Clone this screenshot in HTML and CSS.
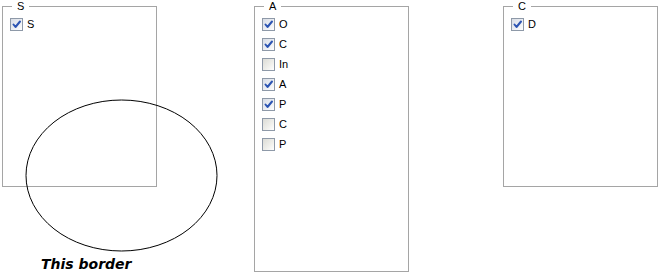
FILE: index.html
```html
<!DOCTYPE html>
<html>
<head>
<meta charset="utf-8">
<link rel="stylesheet" href="styles.css">
</head>
<body>
<div class="page">
  <div class="col">
    <fieldset class="group short">
      <legend>S</legend>
      <label class="item"><span class="box on"><svg viewBox="0 0 11 11" width="11" height="11"><path d="M2.5 5.5 L4.5 8 L9 2.5" /></svg></span>S</label>
    </fieldset>
    <div class="caption">This border</div>
  </div>
  <div class="col">
    <fieldset class="group tall">
      <legend>A</legend>
      <label class="item"><span class="box on"><svg viewBox="0 0 11 11" width="11" height="11"><path d="M2.5 5.5 L4.5 8 L9 2.5" /></svg></span>O</label>
      <label class="item"><span class="box on"><svg viewBox="0 0 11 11" width="11" height="11"><path d="M2.5 5.5 L4.5 8 L9 2.5" /></svg></span>C</label>
      <label class="item"><span class="box"></span>In</label>
      <label class="item"><span class="box on"><svg viewBox="0 0 11 11" width="11" height="11"><path d="M2.5 5.5 L4.5 8 L9 2.5" /></svg></span>A</label>
      <label class="item"><span class="box on"><svg viewBox="0 0 11 11" width="11" height="11"><path d="M2.5 5.5 L4.5 8 L9 2.5" /></svg></span>P</label>
      <label class="item"><span class="box"></span>C</label>
      <label class="item"><span class="box"></span>P</label>
    </fieldset>
  </div>
  <div class="col">
    <fieldset class="group short">
      <legend>C</legend>
      <label class="item"><span class="box on"><svg viewBox="0 0 11 11" width="11" height="11"><path d="M2.5 5.5 L4.5 8 L9 2.5" /></svg></span>D</label>
    </fieldset>
  </div>
  <svg class="ellipse" width="194" height="154" viewBox="0 0 194 154"><ellipse cx="96.5" cy="76.5" rx="95.5" ry="75.5" /></svg>
</div>
</body>
</html>
```
FILE: styles.css
```css
html, body {
  margin: 0;
  padding: 0;
  background: #ffffff;
}
body {
  font-family: "Liberation Sans", Arial, sans-serif;
  font-size: 11px;
  color: #000;
}
.page {
  position: relative;
  width: 661px;
  height: 277px;
  box-sizing: border-box;
  padding-left: 2px;
  display: grid;
  grid-template-columns: 252px 249px 155px;
  align-items: start;
}
.col {
  display: flex;
  flex-direction: column;
  width: 155px;
}
.group {
  box-sizing: border-box;
  width: 155px;
  margin: 0;
  padding: 1px 7px 0 7px;
  border: 1px solid #a5a5a5;
  display: flex;
  flex-direction: column;
}
.group.short { height: 187px; }
.group.tall { height: 272px; }
.group legend {
  margin-left: 2px;
  padding: 0 5px;
  line-height: 13px;
  font-size: 11px;
}
.item {
  display: flex;
  align-items: center;
  height: 20px;
  gap: 4px;
}
.box {
  box-sizing: border-box;
  width: 13px;
  height: 13px;
  border: 1px solid #8e99a8;
  background: linear-gradient(135deg, #dcdcd6 0%, #f0f0ec 60%, #ffffff 100%);
  display: flex;
  align-items: center;
  justify-content: center;
}
.box.on {
  background: linear-gradient(135deg, #d8dde6 0%, #eef0f4 60%, #ffffff 100%);
}
.box svg path {
  fill: none;
  stroke: #2d55b3;
  stroke-width: 2;
  stroke-linecap: round;
  stroke-linejoin: round;
}
.caption {
  margin-top: 69px;
  padding-left: 39px;
  font-family: "DejaVu Sans", Verdana, sans-serif;
  font-weight: bold;
  font-style: italic;
  font-size: 14px;
  line-height: 17px;
}
.ellipse {
  position: absolute;
  left: 25px;
  top: 99px;
}
.ellipse ellipse {
  fill: none;
  stroke: #000;
  stroke-width: 1;
}
```
